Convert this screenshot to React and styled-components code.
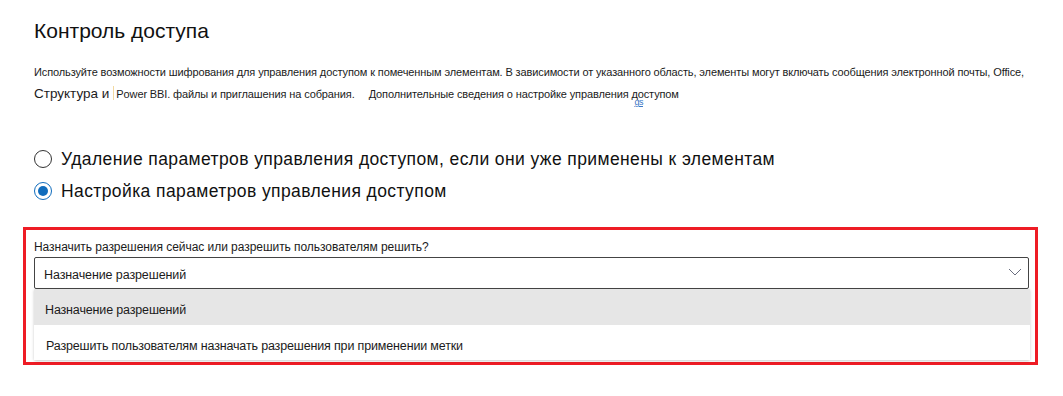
import styled, { createGlobalStyle } from 'styled-components'

const GlobalStyle = createGlobalStyle`
    body {
        margin: 0;
        background: #fff;
        font-family: "Liberation Sans", Arial, sans-serif;
        color: #1b1b1b;
    }
`

const Page = styled.div`
    padding: 19px 25px 0 23px;
    width: 1015px;
`

const Inner = styled.div`
    padding-left: 11px;
`

const Title = styled.h2`
    margin: 0 0 19px;
    font-size: 21px;
    font-weight: 400;
    line-height: 23px;
    color: #111;
`

const Description = styled.p`
    margin: 0;
    font-size: 11px;
    line-height: 22px;
    letter-spacing: -0.12px;
    color: #1b1b1b;
    .big {
        font-size: 13.5px;
        letter-spacing: 0;
    }
    .mark {
        display: inline-block;
        width: 1px;
        height: 14px;
        margin: 0 2px 0 4px;
        background: #f3d9a0;
        vertical-align: -2px;
    }
    .gap {
        display: inline-block;
        width: 14px;
    }
    .link {
        position: relative;
    }
    .link sub {
        position: absolute;
        left: 3px;
        top: 3px;
        font-size: 9px;
        color: #3a77c4;
        text-decoration: underline;
        letter-spacing: -0.5px;
    }
`

const RadioList = styled.div`
    display: flex;
    flex-direction: column;
    gap: 12px;
    margin-top: 44px;
`

const RadioRow = styled.label`
    display: flex;
    align-items: center;
    gap: 9px;
    font-size: 17.5px;
    line-height: 20px;
    letter-spacing: 0.4px;
    color: #111;
`

const RadioCircle = styled.span`
    box-sizing: border-box;
    flex: none;
    width: 18px;
    height: 18px;
    border-radius: 50%;
    border: 1px solid ${p => (p.$checked ? '#0f6cbd' : '#333')};
    display: flex;
    align-items: center;
    justify-content: center;
    &::after {
        content: '';
        width: 10px;
        height: 10px;
        border-radius: 50%;
        background: #0f6cbd;
        display: ${p => (p.$checked ? 'block' : 'none')};
    }
`

const Highlight = styled.div`
    margin-top: 26px;
    border: 3px solid #ee1c25;
    padding: 10px 6px 2px 8px;
`

const FieldLabel = styled.div`
    font-size: 12px;
    line-height: 14px;
    letter-spacing: -0.05px;
    margin-bottom: 3px;
`

const Select = styled.div`
    box-sizing: border-box;
    height: 32px;
    border: 1px solid #444;
    border-radius: 2px;
    display: flex;
    align-items: center;
    justify-content: space-between;
    padding: 3px 6px 0 9px;
    font-size: 12.5px;
    letter-spacing: -0.1px;
    svg {
        margin-top: -5px;
    }
`

const Menu = styled.div`
    margin-right: -1px;
    background: #fff;
    box-shadow: 0 1px 3px rgba(0, 0, 0, 0.22);
    border-radius: 0 0 2px 2px;
`

const MenuItem = styled.div`
    box-sizing: border-box;
    height: ${p => (p.$first ? 36 : 35)}px;
    display: flex;
    align-items: center;
    padding: 6px 0 0 ${p => (p.$first ? 11 : 12)}px;
    background: ${p => (p.$active ? '#e6e6e6' : '#fff')};
    font-size: 12.5px;
    letter-spacing: -0.15px;
`

function Chevron() {
    return (
        <svg width="14" height="8" viewBox="0 0 14 8">
            <path d="M1 1 L7 7 L13 1" fill="none" stroke="#6b6f80" strokeWidth="1" />
        </svg>
    )
}

export default function App() {
    return (
        <Page>
            <GlobalStyle />
            <Inner>
                <Title>Контроль доступа</Title>
                <Description>
                    Используйте возможности шифрования для управления доступом к помеченным элементам. В зависимости от указанного область, элементы могут включать сообщения электронной почты, Office,
                    <br />
                    <span className="big">Структура и</span>
                    <span className="mark" />
                    Power BBI. файлы и приглашения на собрания.
                    <span className="gap" />
                    Дополнительные сведения о настройке управления <span className="link">доступом<sub>gs</sub></span>
                </Description>
                <RadioList>
                    <RadioRow>
                        <RadioCircle />
                        Удаление параметров управления доступом, если они уже применены к элементам
                    </RadioRow>
                    <RadioRow>
                        <RadioCircle $checked />
                        Настройка параметров управления доступом
                    </RadioRow>
                </RadioList>
            </Inner>
            <Highlight>
                <FieldLabel>Назначить разрешения сейчас или разрешить пользователям решить?</FieldLabel>
                <Select>
                    Назначение разрешений
                    <Chevron />
                </Select>
                <Menu>
                    <MenuItem $first $active>Назначение разрешений</MenuItem>
                    <MenuItem>Разрешить пользователям назначать разрешения при применении метки</MenuItem>
                </Menu>
            </Highlight>
        </Page>
    )
}
